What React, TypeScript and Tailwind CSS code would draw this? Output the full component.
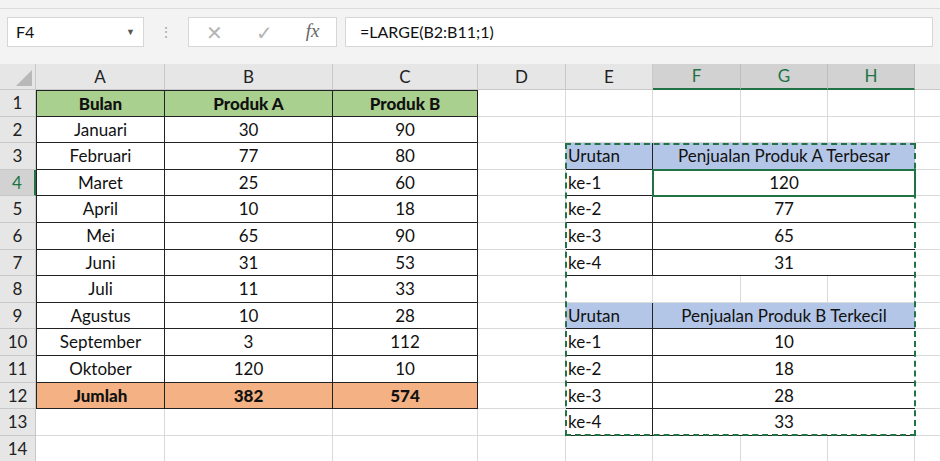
import React from 'react'

const COLS = [129, 168, 145, 88, 87, 88, 87, 87, 60]
const LETTERS = ['A', 'B', 'C', 'D', 'E', 'F', 'G', 'H', '']

type Cell = { t?: string; cls?: string }

function buildRow(r: number): Cell[] {
  const cells: Cell[] = Array.from({ length: 9 }, () => ({}))
  const left = [
    ['Bulan', 'Produk A', 'Produk B'],
    ['Januari', '30', '90'],
    ['Februari', '77', '80'],
    ['Maret', '25', '60'],
    ['April', '10', '18'],
    ['Mei', '65', '90'],
    ['Juni', '31', '53'],
    ['Juli', '11', '33'],
    ['Agustus', '10', '28'],
    ['September', '3', '112'],
    ['Oktober', '120', '10'],
    ['Jumlah', '382', '574'],
  ]
  if (r <= 12) {
    const row = left[r - 1]
    const bg = r === 1 ? 'bg-[#a9d08e] font-black' : r === 12 ? 'bg-[#f4b183] font-black' : 'bg-white'
    row.forEach((t, i) => {
      cells[i] = { t, cls: `${bg} justify-center border-r border-b border-[#222] ${i === 0 ? 'border-l' : ''} ${r === 1 ? 'border-t' : ''}` }
    })
  }
  const right: Record<number, [string, string]> = {
    3: ['Urutan', 'Penjualan Produk A Terbesar'],
    4: ['ke-1', '120'],
    5: ['ke-2', '77'],
    6: ['ke-3', '65'],
    7: ['ke-4', '31'],
    9: ['Urutan', 'Penjualan Produk B Terkecil'],
    10: ['ke-1', '10'],
    11: ['ke-2', '18'],
    12: ['ke-3', '28'],
    13: ['ke-4', '33'],
  }
  if (right[r]) {
    const head = r === 3 || r === 9
    const bg = head ? 'bg-[#b4c6e7]' : 'bg-white'
    cells[4] = { t: right[r][0], cls: `${bg} justify-start pl-[2px] border-r border-b border-[#222]` }
    cells[5] = { t: right[r][1], cls: `${bg} justify-center border-b border-[#222] col-span-3 whitespace-nowrap` }
    cells[6] = { cls: 'hidden' }
    cells[7] = { cls: 'hidden' }
  }
  return cells
}

export default function App() {
  const template = `36px ${COLS.map((c) => c + 'px').join(' ')}`
  return (
    <div className="w-[940px] h-[461px] overflow-hidden bg-[#f3f3f3] text-[#111]" style={{ fontFamily: 'Lato, "Liberation Sans", sans-serif' }}>
      <div className="h-[9px] bg-[#f3f3f3] border-b border-[#dcdcdc]" />
      <div className="flex items-center h-[45px] px-[7px] gap-2">
        <div className="flex items-center justify-between w-[137px] h-[30px] bg-white border border-[#d6d6d6] px-2 text-[16px]">
          <span>F4</span>
          <span className="text-[9px] text-[#555]">▼</span>
        </div>
        <div className="w-[28px] text-center text-[#aaa] text-[14px] leading-none">⋮</div>
        <div className="flex items-center justify-around w-[149px] h-[30px] bg-white border border-[#d6d6d6] text-[#b5b5b5] text-[20px]">
          <span>✕</span>
          <span>✓</span>
          <span className="italic text-[#666] text-[19px]" style={{ fontFamily: '"Liberation Serif", serif' }}>fx</span>
        </div>
        <div className="flex-1 h-[30px] bg-white border border-[#d6d6d6] flex items-center pl-[14px] text-[16px]">=LARGE(B2:B11;1)</div>
      </div>
      <div className="h-[10px]" />
      <div className="relative">
        <div className="grid text-[17px]" style={{ gridTemplateColumns: template }}>
          <div className="h-[26px] bg-[#e6e6e6] border-r border-b border-[#c8c8c8] flex items-end justify-end p-[3px]">
            <div className="w-0 h-0 border-l-[16px] border-l-transparent border-b-[16px] border-b-[#b8b8b8]" />
          </div>
          {LETTERS.map((l, i) => {
            const sel = i >= 5 && i <= 7
            return (
              <div key={l + i} className={`h-[26px] flex items-center justify-center border-r ${sel ? 'bg-[#d2d2d2] text-[#217346] border-b-2 border-b-[#217346] border-r-[#bdbdbd]' : 'bg-[#e6e6e6] text-[#222] border-b border-[#c8c8c8]'}`}>
                {l}
              </div>
            )
          })}
          {Array.from({ length: 14 }, (_, k) => k + 1).map((r) => {
            const cells = buildRow(r)
            return (
              <React.Fragment key={r}>
                <div className={`h-[26.6px] flex items-center justify-center border-r border-b border-[#c8c8c8] ${r === 4 ? 'bg-[#d2d2d2] text-[#217346] border-r-2 border-r-[#217346]' : 'bg-[#e6e6e6] text-[#222]'}`}>{r}</div>
                {cells.map((c, i) =>
                  c.cls === 'hidden' ? null : (
                    <div key={i} className={`h-[26.6px] flex items-center ${c.cls ?? 'bg-white border-r border-b border-[#dadada]'} ${r === 4 && i === 5 ? 'outline-2 outline-[#217346] -outline-offset-1 z-10' : ''}`}>
                      {c.t}
                    </div>
                  ),
                )}
              </React.Fragment>
            )
          })}
        </div>
        <div className="absolute left-[565px] top-[79px] w-[351px] h-[293px] border-2 border-dashed border-[#217346] pointer-events-none" />
      </div>
    </div>
  )
}
